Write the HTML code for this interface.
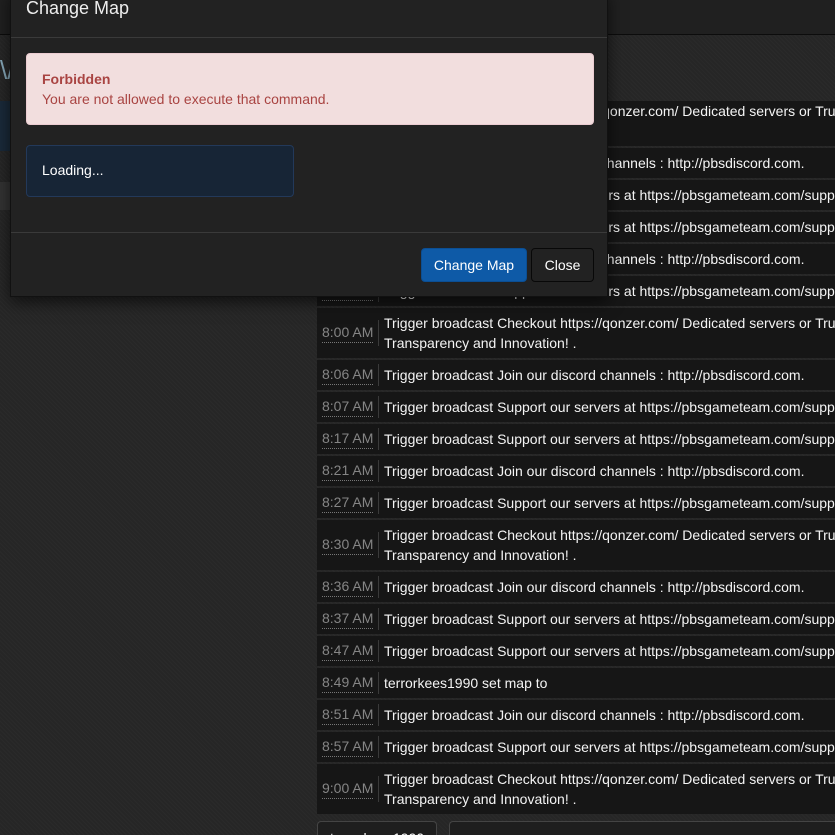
<!DOCTYPE html>
<html style="width:835px;height:835px;overflow:hidden"><head><style>
*{margin:0;padding:0;box-sizing:border-box}
body{width:835px;height:835px;overflow:hidden;background:#262626;font-family:"Liberation Sans",Arial,sans-serif;position:relative;
background-image:repeating-linear-gradient(45deg,#262626 0,#262626 2px,#2a2a2a 2px,#2a2a2a 3px)}
.top{position:absolute;left:0;top:0;width:835px;height:35px;background:#202020;border-bottom:1px solid #0c0c0c}
.row{position:absolute;left:317px;width:518px;background:#161616;color:#f4f4f4;font-size:14px;line-height:20px}
.t{position:absolute;left:5px;color:#858585;border-bottom:1px dotted #777;line-height:19px}
.sep{position:absolute;left:61px;width:1px;background:#3a3a3a}
.m{position:absolute;left:67px;white-space:nowrap}
.modal{position:absolute;left:10px;top:-10px;width:598px;height:307px;background:#222;border:1px solid #111;border-top:none;box-shadow:0 5px 15px rgba(0,0,0,.6)}
h4{position:absolute;left:15px;top:8px;color:#eee;font-weight:normal;font-size:18px;line-height:20px}
.hl{position:absolute;left:0;width:596px;height:1px;background:#3a3a3a}
.alert{position:absolute;left:15px;top:63px;width:568px;height:72px;background:#f2dede;border:1px solid #ebccd1;border-radius:4px;color:#a94442;font-size:14px;padding:15px 15px;line-height:20px}
.load{position:absolute;left:15px;top:155px;width:268px;height:52px;background:#172536;border:1px solid #23395a;border-radius:4px;color:#fff;font-size:14px;padding:16px 15px}
.btn{position:absolute;top:258px;height:34px;border-radius:4px;color:#fff;font-size:14px;line-height:32px;text-align:center}
</style></head><body>
<div class="top"></div>
<div style="position:absolute;left:0;top:55px;width:10px;height:30px;color:#8ab;font-size:26px;overflow:hidden">\/</div>
<div style="position:absolute;left:0;top:101px;width:10px;height:50px;background:#1a2a3a"></div>
<div style="position:absolute;left:0;top:182px;width:10px;height:28px;background:#333"></div>

<div class="row" style="top:101px;height:45px"><div class="m" style="top:0">Trigger broadcast Checkout https://qonzer.com/ Dedicated servers or Trust,</div></div>
<div class="row" style="top:148px;height:30px"><div class="m" style="top:5px">Trigger broadcast Join our discord channels : http://pbsdiscord.com.</div></div>
<div class="row" style="top:180px;height:30px"><div class="m" style="top:5px">Trigger broadcast Support our servers at https://pbsgameteam.com/support</div></div>
<div class="row" style="top:212px;height:30px"><div class="m" style="top:5px">Trigger broadcast Support our servers at https://pbsgameteam.com/support</div></div>
<div class="row" style="top:244px;height:30px"><div class="m" style="top:5px">Trigger broadcast Join our discord channels : http://pbsdiscord.com.</div></div>
<div class="row" style="top:276px;height:30px"><div class="t" style="top:5px">8:00 AM</div><div class="sep" style="top:4px;height:22px"></div><div class="m" style="top:5px">Trigger broadcast Support our servers at https://pbsgameteam.com/support</div></div>

<div class="row" style="top:308px;height:50px"><div class="t" style="top:15px">8:00 AM</div><div class="sep" style="top:12px;height:26px"></div><div class="m" style="top:5px">Trigger broadcast Checkout https://qonzer.com/ Dedicated servers or Trust,<br>Transparency and Innovation! .</div></div>
<div class="row" style="top:360px;height:30px"><div class="t" style="top:5px">8:06 AM</div><div class="sep" style="top:4px;height:22px"></div><div class="m" style="top:5px">Trigger broadcast Join our discord channels : http://pbsdiscord.com.</div></div>
<div class="row" style="top:392px;height:30px"><div class="t" style="top:5px">8:07 AM</div><div class="sep" style="top:4px;height:22px"></div><div class="m" style="top:5px">Trigger broadcast Support our servers at https://pbsgameteam.com/support</div></div>
<div class="row" style="top:424px;height:30px"><div class="t" style="top:5px">8:17 AM</div><div class="sep" style="top:4px;height:22px"></div><div class="m" style="top:5px">Trigger broadcast Support our servers at https://pbsgameteam.com/support</div></div>
<div class="row" style="top:456px;height:30px"><div class="t" style="top:5px">8:21 AM</div><div class="sep" style="top:4px;height:22px"></div><div class="m" style="top:5px">Trigger broadcast Join our discord channels : http://pbsdiscord.com.</div></div>
<div class="row" style="top:488px;height:30px"><div class="t" style="top:5px">8:27 AM</div><div class="sep" style="top:4px;height:22px"></div><div class="m" style="top:5px">Trigger broadcast Support our servers at https://pbsgameteam.com/support</div></div>
<div class="row" style="top:520px;height:50px"><div class="t" style="top:15px">8:30 AM</div><div class="sep" style="top:12px;height:26px"></div><div class="m" style="top:5px">Trigger broadcast Checkout https://qonzer.com/ Dedicated servers or Trust,<br>Transparency and Innovation! .</div></div>
<div class="row" style="top:572px;height:30px"><div class="t" style="top:5px">8:36 AM</div><div class="sep" style="top:4px;height:22px"></div><div class="m" style="top:5px">Trigger broadcast Join our discord channels : http://pbsdiscord.com.</div></div>
<div class="row" style="top:604px;height:30px"><div class="t" style="top:5px">8:37 AM</div><div class="sep" style="top:4px;height:22px"></div><div class="m" style="top:5px">Trigger broadcast Support our servers at https://pbsgameteam.com/support</div></div>
<div class="row" style="top:636px;height:30px"><div class="t" style="top:5px">8:47 AM</div><div class="sep" style="top:4px;height:22px"></div><div class="m" style="top:5px">Trigger broadcast Support our servers at https://pbsgameteam.com/support</div></div>
<div class="row" style="top:668px;height:30px"><div class="t" style="top:5px">8:49 AM</div><div class="sep" style="top:4px;height:22px"></div><div class="m" style="top:5px">terrorkees1990 set map to</div></div>
<div class="row" style="top:700px;height:30px"><div class="t" style="top:5px">8:51 AM</div><div class="sep" style="top:4px;height:22px"></div><div class="m" style="top:5px">Trigger broadcast Join our discord channels : http://pbsdiscord.com.</div></div>
<div class="row" style="top:732px;height:30px"><div class="t" style="top:5px">8:57 AM</div><div class="sep" style="top:4px;height:22px"></div><div class="m" style="top:5px">Trigger broadcast Support our servers at https://pbsgameteam.com/support</div></div>
<div class="row" style="top:764px;height:50px"><div class="t" style="top:15px">9:00 AM</div><div class="sep" style="top:12px;height:26px"></div><div class="m" style="top:5px">Trigger broadcast Checkout https://qonzer.com/ Dedicated servers or Trust,<br>Transparency and Innovation! .</div></div>

<div style="position:absolute;left:317px;top:821px;width:120px;height:14px;overflow:hidden;background:#1e1e1e;border:1px solid #444;border-bottom:none;border-radius:4px 4px 0 0;color:#fff;font-size:14px;padding:6px 12px;line-height:20px">terrorkees1990</div>
<div style="position:absolute;left:449px;top:821px;width:386px;height:14px;background:#1e1e1e;border:1px solid #444;border-bottom:none;border-right:none;border-radius:4px 0 0 0"></div>

<div class="modal">
<h4 style="top:8px">Change Map</h4>
<div class="hl" style="top:47px"></div>
<div class="alert"><b>Forbidden</b><br>You are not allowed to execute that command.</div>
<div class="load">Loading...</div>
<div class="hl" style="top:242px"></div>
<div class="btn" style="left:410px;width:106px;background:#0e5aa7;border:1px solid #0b4e93">Change Map</div>
<div class="btn" style="left:520px;width:63px;background:#222;border:1px solid #080808">Close</div>
</div>
</body></html>
